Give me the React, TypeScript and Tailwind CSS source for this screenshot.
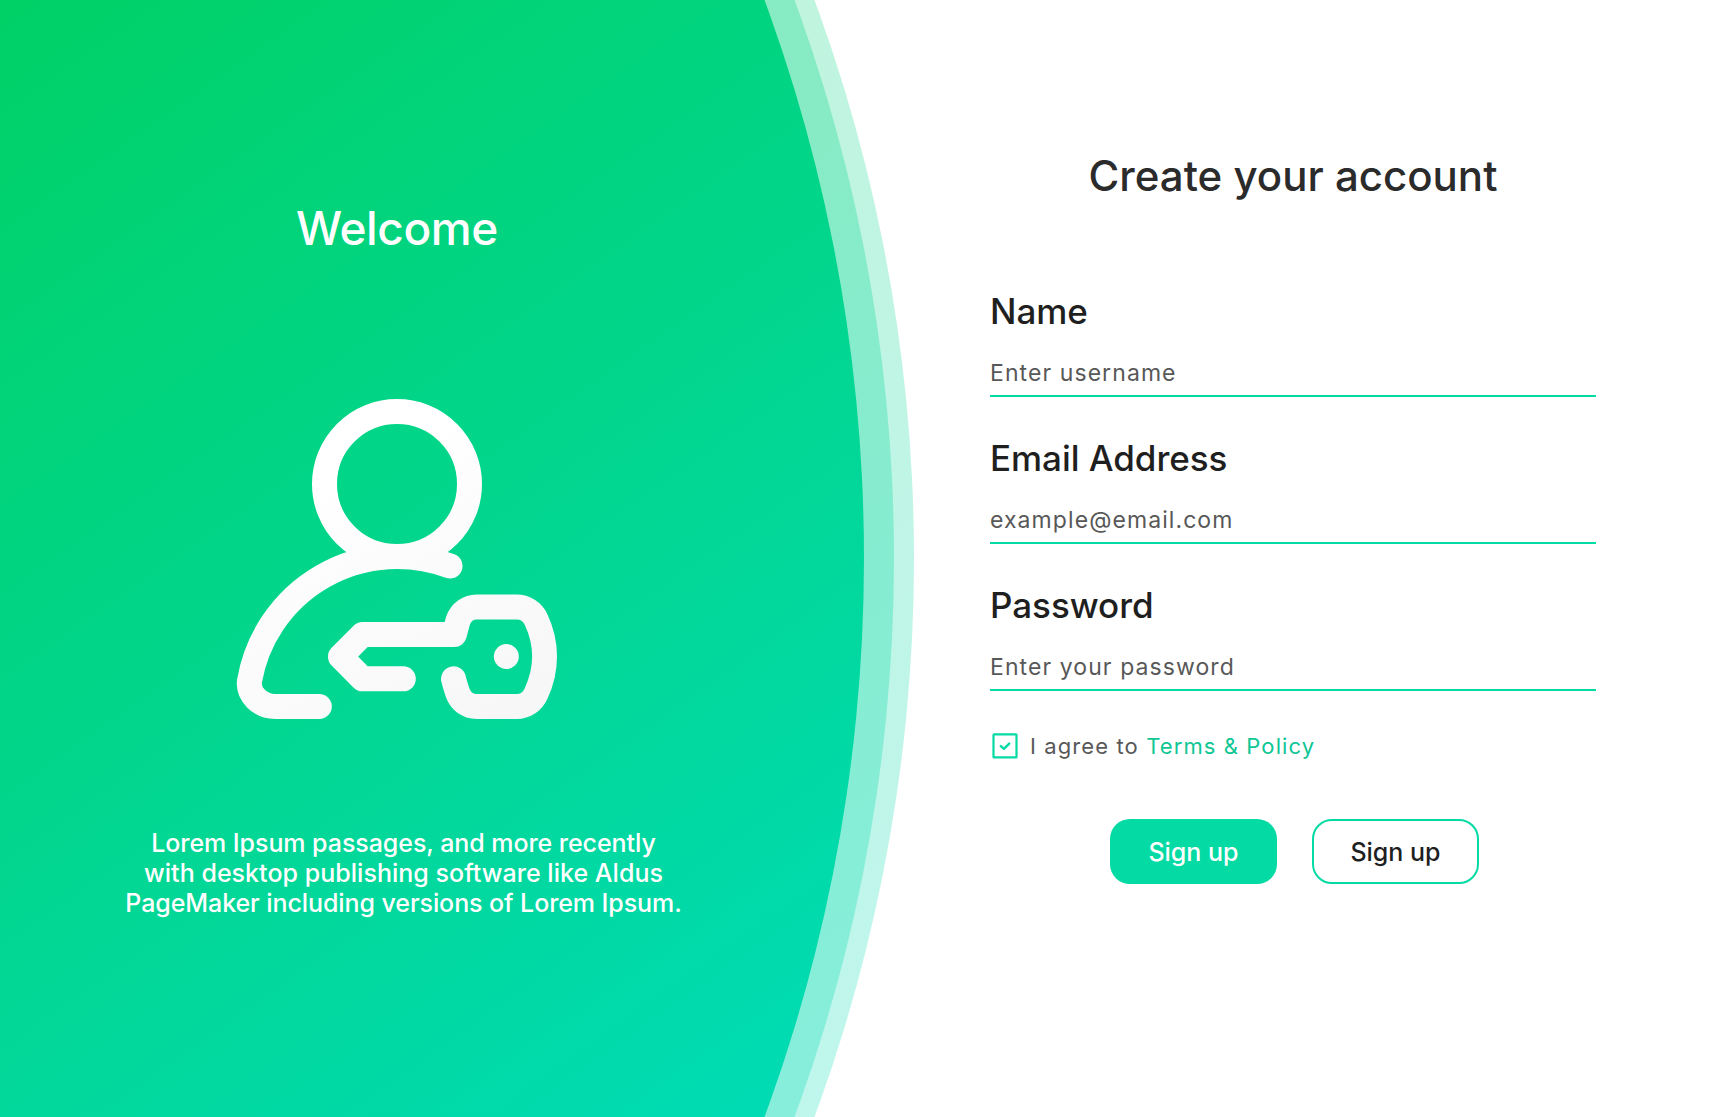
const GRADIENT =
  "bg-[linear-gradient(145deg,#00d166_0%,#02d68f_50%,#00dcb9_100%)]";

const fields = [
  { label: "Name", placeholder: "Enter username", type: "text" },
  { label: "Email Address", placeholder: "example@email.com", type: "email" },
  { label: "Password", placeholder: "Enter your password", type: "password" },
];

function UserKeyIcon() {
  return (
    <svg viewBox="0 0 1050 1050" className="h-[350px] w-[350px]" fill="none" stroke="url(#iconShade)" strokeWidth="75" strokeLinecap="round" strokeLinejoin="round">
      <defs>
        <linearGradient id="iconShade" gradientUnits="userSpaceOnUse" x1="300" y1="60" x2="840" y2="1010">
          <stop offset="0.2" stopColor="#ffffff" />
          <stop offset="1" stopColor="#f7f7f7" />
        </linearGradient>
      </defs>
      <circle cx="531" cy="312" r="217.5" />
      <path d="M298 979.5H165C121 979.5 83 943 88.500 903A450 450 0 0 1 690 558" />
      <path d="M550 896.500H427.500L361.500 830L427.500 763.500H703L714 722C723 697 745 681 770 681H890C915 681 937 695 948 718C982 790 982 868 948 941C937 965 915 979.500 890 979.500H770C743 979.500 722 963 713 938C707 922 704 912 700.500 896.500" />
      <circle cx="859" cy="829.500" r="37.500" fill="url(#iconShade)" stroke="none" />
    </svg>
  );
}

function WelcomePanel() {
  return (
    <section className="relative h-full w-[914px] shrink-0">
      <div className={`${GRADIENT} absolute inset-0 opacity-25 [clip-path:circle(1617px_at_-703px_558.5px)]`} />
      <div className={`${GRADIENT} absolute inset-0 opacity-30 [clip-path:circle(1617px_at_-723px_558.5px)]`} />
      <div className={`${GRADIENT} absolute inset-0 [clip-path:circle(1617px_at_-753px_558.5px)]`} />
      <div className="relative flex w-[794px] flex-col items-center pt-[200px] text-white">
        <h1 className="text-[46px] leading-[56px] font-medium tracking-[-0.4px]">Welcome</h1>
        <div className="mt-[124px] -ml-[4px]">
          <UserKeyIcon />
        </div>
        <p className="mt-[98px] ml-[13px] text-center text-[25px] leading-[30px] font-medium whitespace-nowrap">
          <span className="tracking-[-0.06px]">Lorem Ipsum passages, and more recently</span>
          <br />
          <span className="tracking-[0.03px]">with desktop publishing software like Aldus</span>
          <br />
          <span className="tracking-[-0.08px]">PageMaker including versions of Lorem Ipsum.</span>
        </p>
      </div>
    </section>
  );
}

function SignUpForm() {
  return (
    <form className="ml-[76px] w-[606px] pt-[150px]">
      <h2 className="text-center text-[42px] leading-[52px] font-medium text-[#2b2b2b]">Create your account</h2>
      <div className="mt-[88px] flex flex-col gap-[40px]">
        {fields.map((field) => (
          <label key={field.label} className="flex h-[107px] flex-col border-b-2 border-[#04daa4]">
            <span className="text-[35px] leading-[42px] font-medium tracking-[-0.05px] text-[#1f1f1f]">{field.label}</span>
            <input
              type={field.type}
              placeholder={field.placeholder}
              className="mt-[26px] h-[30px] w-full bg-transparent text-[23px] tracking-[1.08px] outline-none placeholder:text-[#585858] placeholder:opacity-100"
            />
          </label>
        ))}
      </div>
      <div className="mt-[40px] flex h-[30px] items-center">
        <svg viewBox="0 0 30 30" className="h-[30px] w-[30px]" fill="none" stroke="#04daa4" strokeWidth="2.200">
          <rect x="3.500" y="3.400" width="23" height="23" rx="0.500" />
          <path d="M10.800 15.100L13.900 17.800L19.200 12.600" strokeWidth="2.400" strokeLinecap="round" strokeLinejoin="round" />
        </svg>
        <p className="ml-[10px] text-[22px] leading-[30px] tracking-[0.05em] whitespace-nowrap text-[#585858]">
          I agree to <a className="text-[#0fc695]">Terms &amp; Policy</a>
        </p>
      </div>
      <div className="mt-[58px] ml-[120px] flex gap-[35px]">
        <button type="button" className="h-[65px] w-[167px] rounded-[20px] bg-[#04daa4] pt-[2px] text-[25px] font-medium text-white">
          Sign up
        </button>
        <button type="button" className="h-[65px] w-[167px] rounded-[20px] border-2 border-[#04daa4] pt-[2px] text-[25px] font-medium text-[#1f1f1f]">
          Sign up
        </button>
      </div>
    </form>
  );
}

export default function App() {
  return (
    <main className="flex h-[1117px] w-[1728px] overflow-hidden bg-white font-[Inter,sans-serif]">
      <WelcomePanel />
      <SignUpForm />
    </main>
  );
}
